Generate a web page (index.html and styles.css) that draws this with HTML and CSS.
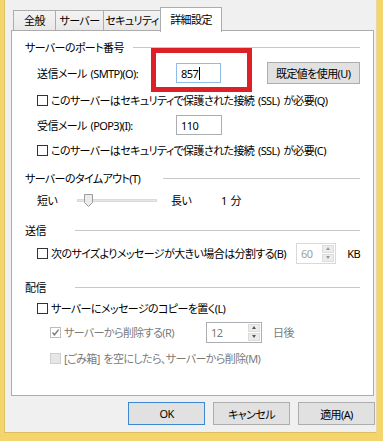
FILE: index.html
```html
<!DOCTYPE html>
<html lang="ja">
<head>
<meta charset="utf-8">
<link rel="stylesheet" href="styles.css">
</head>
<body>
<div class="frame">
  <div class="window">
    <div class="tabs">
      <div class="tab t1">全般</div>
      <div class="tab t2">サーバー</div>
      <div class="tab t3">セキュリティ</div>
      <div class="tab active">詳細設定</div>
    </div>
    <div class="panel">
      <div class="heading h1"><span class="htext hw-port">サーバーのポート番号</span><span class="hline"></span></div>
      <div class="row r-smtp">
        <span class="label lw-port">送信メール (SMTP)(O):</span>
        <span class="input focus">857<span class="caret"></span></span>
        <span class="button btn-reset">既定値を使用(U)</span>
      </div>
      <div class="row r-cb1"><span class="check"></span><span>このサーバーはセキュリティで保護された接続 (SSL) が必要(Q)</span></div>
      <div class="row r-pop">
        <span class="label lw-port">受信メール (POP3)(I):</span>
        <span class="input">110</span>
      </div>
      <div class="row r-cb2"><span class="check"></span><span>このサーバーはセキュリティで保護された接続 (SSL) が必要(C)</span></div>

      <div class="heading h2"><span class="htext hw-timeout">サーバーのタイムアウト(T)</span><span class="hline"></span></div>
      <div class="row r-slider">
        <span class="label lw-short">短い</span>
        <span class="slider">
          <span class="track"></span>
          <svg class="thumb" width="9" height="13" viewBox="0 0 9 13"><path d="M0.5 0.5H8.5V8.5L4.5 12.5L0.5 8.5Z" fill="#ececec" stroke="#9c9c9c"/></svg>
        </span>
        <span class="label lw-long">長い</span>
        <span>1 分</span>
      </div>

      <div class="heading h3"><span class="htext hw-short">送信</span><span class="hline"></span></div>
      <div class="row r-send">
        <span class="check"></span><span class="label lw-split">次のサイズよりメッセージが大きい場合は分割する(B)</span>
        <span class="spin disabled w-60"><span class="spin-val">60</span><span class="spin-btns"><span class="sb up"></span><span class="sb dn"></span></span></span>
        <span class="unit">KB</span>
      </div>

      <div class="heading h4"><span class="htext hw-short">配信</span><span class="hline"></span></div>
      <div class="row r-copy"><span class="check"></span><span>サーバーにメッセージのコピーを置く(L)</span></div>
      <div class="row r-del sub">
        <span class="check checked dis"><svg width="9" height="9" viewBox="0 0 9 9"><path d="M1.5 4.5L3.5 6.8L7.6 1.6" fill="none" stroke="#7a7a7a" stroke-width="1.4"/></svg></span>
        <span class="label lw-del gray">サーバーから削除する(R)</span>
        <span class="spin w-12"><span class="spin-val gray">12</span><span class="spin-btns"><span class="sb up"></span><span class="sb dn"></span></span></span>
        <span class="unit gray">日後</span>
      </div>
      <div class="row r-trash sub"><span class="check dis fill"></span><span class="gray">[ごみ箱] を空にしたら、サーバーから削除(M)</span></div>
    </div>
    <div class="buttons">
      <span class="button dlg default">OK</span>
      <span class="button dlg">キャンセル</span>
      <span class="button dlg">適用(A)</span>
    </div>
  </div>
  <div class="highlight"></div>
</div>
</body>
</html>
```
FILE: styles.css
```css
html, body {
  margin: 0;
  padding: 0;
  background: #f4d46c;
}
body {
  font-family: "Noto Sans", "Noto Sans CJK JP", sans-serif;
  font-size: 11px;
  letter-spacing: -0.6px;
  word-spacing: 1.5px;
  font-feature-settings: "palt";
  color: #000;
  white-space: nowrap;
}
.frame {
  position: relative;
  width: 383px;
  height: 441px;
  box-sizing: border-box;
  padding: 0 6px 8px 4px;
  background: #f4d46c;
}
.window {
  height: 100%;
  box-sizing: border-box;
  background: #f0f0f0;
  border-left: 1px solid #e2c660;
  border-right: 1px solid #e9d9a0;
  border-bottom: 1px solid #dcbf5c;
  display: flex;
  flex-direction: column;
}
.tabs {
  display: flex;
  align-items: flex-start;
  padding: 7px 0 0 8px;
  height: 24px;
  position: relative;
  z-index: 2;
}
.tab {
  height: 20px;
  margin-top: 3px;
  box-sizing: border-box;
  border: 1px solid #acacac;
  border-bottom: none;
  background: linear-gradient(#f3f3f3, #e9e9e9);
  display: flex;
  align-items: center;
  justify-content: center;
  line-height: 1;
}
.tab + .tab { margin-left: -1px; }
.t1 { width: 43px; }
.t2 { width: 49px; }
.t3 { width: 58px; }
.tab.active {
  width: 62px;
  height: 25px;
  margin-top: 0;
  background: #fff;
  margin-left: -1px;
  padding-bottom: 2px;
}
.panel {
  margin: -1px 2px 0 6px;
  height: 366px;
  box-sizing: border-box;
  background: #fff;
  border: 1px solid #acacac;
  padding: 7px 13px 0 13px;
  position: relative;
  z-index: 1;
}
.heading {
  display: flex;
  align-items: center;
  height: 18px;
}
.htext { flex: none; }
.hw-port { width: 108px; }
.hw-timeout { width: 138px; }
.hw-short { width: 50px; }
.hline {
  flex: 1;
  height: 1px;
  background: #c8c8c8;
}
.h2 { margin-top: 9px; }
.h3 { margin-top: 8px; }
.h4 { margin-top: 11px; }
.row {
  display: flex;
  align-items: center;
  padding-left: 12px;
}
.row.sub { padding-left: 25px; }
.r-smtp { height: 34px; }
.r-cb1 { height: 20px; }
.r-pop { height: 30px; }
.r-cb2 { height: 20px; }
.r-slider { height: 26px; }
.r-send { height: 28px; }
.r-copy { height: 24px; }
.r-del { height: 24px; }
.r-trash { height: 28px; }
.label { flex: none; }
.lw-port { width: 139px; }
.lw-short { width: 40px; }
.lw-long { width: 50px; }
.lw-split { width: 245px; }
.lw-del { width: 142px; }
.gray { color: #7a7a7a; }
.input {
  width: 46px;
  height: 20px;
  box-sizing: border-box;
  border: 1px solid #abadb3;
  padding-left: 4px;
  display: flex;
  align-items: center;
  background: #fff;
}
.input.focus { border-color: #8fbde8; }
.caret {
  display: inline-block;
  width: 1px;
  height: 13px;
  background: #000;
  margin-left: 1px;
}
.button {
  box-sizing: border-box;
  border: 1px solid #adadad;
  background: #e1e1e1;
  display: flex;
  align-items: center;
  justify-content: center;
}
.btn-reset {
  width: 97px;
  height: 22px;
  margin-left: 46px;
}
.check {
  flex: none;
  width: 11px;
  height: 11px;
  box-sizing: border-box;
  border: 1px solid #333;
  background: #fff;
  margin-right: 3px;
  display: flex;
  align-items: center;
  justify-content: center;
}
.check.dis { border-color: #bcbcbc; }
.check.fill { background: #e6e6e6; border-color: #cfcfcf; }
.slider {
  position: relative;
  width: 80px;
  height: 14px;
  margin-right: 14px;
  display: flex;
  align-items: center;
}
.track {
  width: 100%;
  height: 3px;
  box-sizing: border-box;
  background: #e6e6e6;
  border: 1px solid #dadada;
}
.thumb {
  position: absolute;
  left: 7px;
  top: 1px;
}
.spin {
  height: 21px;
  box-sizing: border-box;
  border: 1px solid #abadb3;
  display: flex;
  align-items: center;
  justify-content: space-between;
  padding: 1px 1px 1px 4px;
  background: #fff;
}
.spin.disabled { border-color: #d9d9d9; color: #a0a0a0; }
.w-60 { width: 46px; }
.w-12 { width: 56px; }
.spin-btns {
  width: 12px;
  height: 17px;
  display: flex;
  flex-direction: column;
  gap: 1px;
}
.sb {
  flex: 1;
  background: #ececec;
  border: 1px solid #dcdcdc;
  box-sizing: border-box;
  display: flex;
  align-items: center;
  justify-content: center;
}
.sb::after {
  content: "";
  width: 0;
  height: 0;
  border-left: 2.5px solid transparent;
  border-right: 2.5px solid transparent;
}
.up::after { border-bottom: 3px solid #555; }
.dn::after { border-top: 3px solid #555; }
.disabled .up::after { border-bottom-color: #999; }
.disabled .dn::after { border-top-color: #999; }
.unit { margin-left: 11px; }
.buttons {
  display: flex;
  justify-content: flex-end;
  gap: 8px;
  padding: 6px 1px 0 0;
}
.dlg {
  width: 77px;
  height: 23px;
}
.dlg.default { border-color: #3c88d0; }
.highlight {
  position: absolute;
  left: 151px;
  top: 48px;
  width: 101px;
  height: 44px;
  box-sizing: border-box;
  border: 5px solid #dd1f26;
  z-index: 5;
}
```
